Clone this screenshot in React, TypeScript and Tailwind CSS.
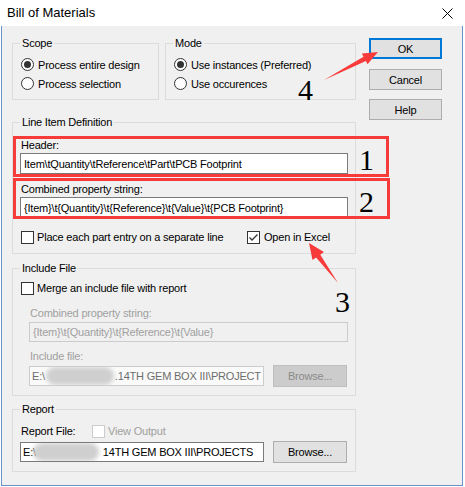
import React from "react";

function Radio({ checked }: { checked?: boolean }) {
  return (
    <span className="w-[13px] h-[13px] rounded-full border border-[#333333] bg-white flex items-center justify-center shrink-0">
      {checked && <span className="w-[7px] h-[7px] rounded-full bg-[#333333]" />}
    </span>
  );
}

function Check({ checked, disabled }: { checked?: boolean; disabled?: boolean }) {
  return (
    <span
      className={
        disabled
          ? "w-[13px] h-[13px] border border-[#cccccc] bg-white shrink-0 flex items-center justify-center"
          : "w-[13px] h-[13px] border border-[#333333] bg-white shrink-0 flex items-center justify-center"
      }
    >
      {checked && (
        <svg width="11" height="11" viewBox="0 0 11 11">
          <path d="M1.5 5.5 L4 8 L9.5 2.5" stroke="#333333" strokeWidth="1.3" fill="none" />
        </svg>
      )}
    </span>
  );
}

function Group({
  label,
  className,
  children,
}: {
  label: string;
  className: string;
  children?: React.ReactNode;
}) {
  return (
    <div className={"relative border border-[#dcdcdc] " + className}>
      <span className="absolute -top-[8px] left-[7px] px-[2px] bg-[#f0f0f0] leading-[14px] whitespace-nowrap">
        {label}
      </span>
      {children}
    </div>
  );
}

function Blob({ className }: { className: string }) {
  return <span className={"inline-block shrink-0 bg-[#cfcfcf] rounded-[9px] blur-[2px] " + className} />;
}

export default function App() {
  return (
    <div className="relative w-[465px] h-[487px] bg-white overflow-hidden font-['Liberation_Sans',Arial,sans-serif] text-[11px] tracking-[-0.2px] leading-[14px] text-black">
      {/* Title bar */}
      <div className="h-[26px] flex items-center pl-[7px]">
        <span className="text-[13px] tracking-normal leading-[16px]">Bill of Materials</span>
        <svg className="ml-auto mr-[12px]" width="11" height="11" viewBox="0 0 11 11">
          <path d="M0.5 0.5 L10.5 10.5 M10.5 0.5 L0.5 10.5" stroke="#000000" strokeWidth="1" />
        </svg>
      </div>

      {/* Body */}
      <div className="ml-[1px] w-[462px] h-[460px] bg-[#f0f0f0] border-x border-b border-[#6a93cc] flex pl-[10px]">
        {/* Left column */}
        <div className="w-[344px] flex flex-col pt-[17px]">
          <div className="flex gap-[6px]">
            <Group label="Scope" className="w-[147px] h-[57px] pt-[11px]">
              <div className="h-[19px] flex items-center gap-[4px] pl-[8px]">
                <Radio checked />
                <span>Process entire design</span>
              </div>
              <div className="h-[19px] flex items-center gap-[4px] pl-[8px]">
                <Radio />
                <span>Process selection</span>
              </div>
            </Group>
            <Group label="Mode" className="w-[191px] h-[57px] pt-[11px]">
              <div className="h-[19px] flex items-center gap-[4px] pl-[8px]">
                <Radio checked />
                <span>Use instances (Preferred)</span>
              </div>
              <div className="h-[19px] flex items-center gap-[4px] pl-[8px]">
                <Radio />
                <span>Use occurences</span>
              </div>
            </Group>
          </div>

          <Group label="Line Item Definition" className="mt-[22px] h-[132px] px-[7px] pt-[15px] flex flex-col">
            <div className="h-[14px] pl-[1px]">Header:</div>
            <div className="mt-[1px] h-[21px] border border-[#7a7a7a] bg-white flex items-center px-[3px] whitespace-nowrap overflow-hidden">
              {"Item\\tQuantity\\tReference\\tPart\\tPCB Footprint"}
            </div>
            <div className="mt-[8px] h-[14px] pl-[1px]">Combined property string:</div>
            <div className="mt-[1px] h-[21px] border border-[#7a7a7a] bg-white flex items-center px-[3px] whitespace-nowrap overflow-hidden">
              {"{Item}\\t{Quantity}\\t{Reference}\\t{Value}\\t{PCB Footprint}"}
            </div>
            <div className="mt-[11px] h-[16px] flex items-center">
              <div className="w-[227px] pl-[1px] flex items-center gap-[3px]">
                <Check />
                <span>Place each part entry on a separate line</span>
              </div>
              <div className="flex items-center gap-[4px]">
                <Check checked />
                <span>Open in Excel</span>
              </div>
            </div>
          </Group>

          <Group label="Include File" className="mt-[14px] h-[128px] px-[7px] pt-[11px] flex flex-col">
            <div className="h-[16px] pl-[1px] flex items-center gap-[3px]">
              <Check />
              <span>Merge an include file with report</span>
            </div>
            <div className="mt-[10px] h-[14px] ml-[10px] text-[#a0a0a0]">Combined property string:</div>
            <div className="mt-[2px] ml-[9px] h-[20px] border border-[#cccccc] bg-[#f0f0f0] flex items-center px-[3px] text-[#a0a0a0] whitespace-nowrap overflow-hidden">
              {"{Item}\\t{Quantity}\\t{Reference}\\t{Value}"}
            </div>
            <div className="mt-[7px] h-[14px] ml-[10px] text-[#a0a0a0]">Include file:</div>
            <div className="mt-[2px] ml-[9px] h-[22px] flex items-center gap-[9px]">
              <div className="w-[235px] h-[20px] border border-[#cccccc] bg-[#fafafa] flex items-center px-[2px] text-[#6d6d6d] whitespace-nowrap overflow-hidden">
                <span>E:\</span>
                <Blob className="w-[68px] h-[18px] ml-[1px] mr-[1px]" />
                <span>.14TH GEM BOX III\PROJECT</span>
              </div>
              <div className="w-[74px] h-[22px] border border-[#bfbfbf] bg-[#cccccc] text-[#8a8a8a] flex items-center justify-center">
                Browse...
              </div>
            </div>
          </Group>

          <Group label="Report" className="mt-[13px] h-[63px] px-[7px] pt-[13px] flex flex-col">
            <div className="h-[16px] flex items-center">
              <span className="w-[72px] pl-[1px]">Report File:</span>
              <div className="flex items-center gap-[3px]">
                <Check disabled />
                <span className="text-[#a0a0a0]">View Output</span>
              </div>
            </div>
            <div className="mt-[2px] h-[22px] flex items-center gap-[9px]">
              <div className="w-[244px] h-[20px] border border-[#7a7a7a] bg-white flex items-center px-[2px] whitespace-nowrap overflow-hidden">
                <span>E:\</span>
                <Blob className="w-[66px] h-[18px] -ml-[3px] mr-[4px]" />
                <span>14TH GEM BOX III\PROJECTS</span>
              </div>
              <div className="w-[74px] h-[22px] border border-[#adadad] bg-[#e1e1e1] flex items-center justify-center">
                Browse...
              </div>
            </div>
          </Group>
        </div>

        {/* Right column: buttons */}
        <div className="ml-[13px] w-[73px] flex flex-col pt-[12px]">
          <div className="h-[21px] border-2 border-[#0078d7] bg-[#e1e1e1] flex items-center justify-center">OK</div>
          <div className="mt-[10px] h-[21px] border border-[#adadad] bg-[#e1e1e1] flex items-center justify-center">
            Cancel
          </div>
          <div className="mt-[9px] h-[21px] border border-[#adadad] bg-[#e1e1e1] flex items-center justify-center">
            Help
          </div>
        </div>
      </div>

      {/* Annotation overlay */}
      <svg className="absolute inset-0 pointer-events-none" width="465" height="487" viewBox="0 0 465 487">
        <rect x="14.5" y="137.5" width="373" height="38" fill="none" stroke="#f73b3b" strokeWidth="3" />
        <rect x="14.5" y="179.5" width="374" height="38" fill="none" stroke="#f73b3b" strokeWidth="3" />
        <polygon
          points="324,80 363.5,56.7 361.9,53.6 378,52 367.5,64.2 365.9,61.1"
          fill="#f73b3b"
        />
        <polygon
          points="338,283 320.3,254.7 323.9,252.1 309,243 312.5,260.1 316.1,257.5"
          fill="#f73b3b"
        />
        <g fontFamily="'Liberation Serif', 'Times New Roman', serif" fontSize="30" fill="#000000">
          <text x="359" y="170">1</text>
          <text x="359" y="212">2</text>
          <text x="335" y="312">3</text>
          <text x="298" y="100">4</text>
        </g>
      </svg>
    </div>
  );
}
